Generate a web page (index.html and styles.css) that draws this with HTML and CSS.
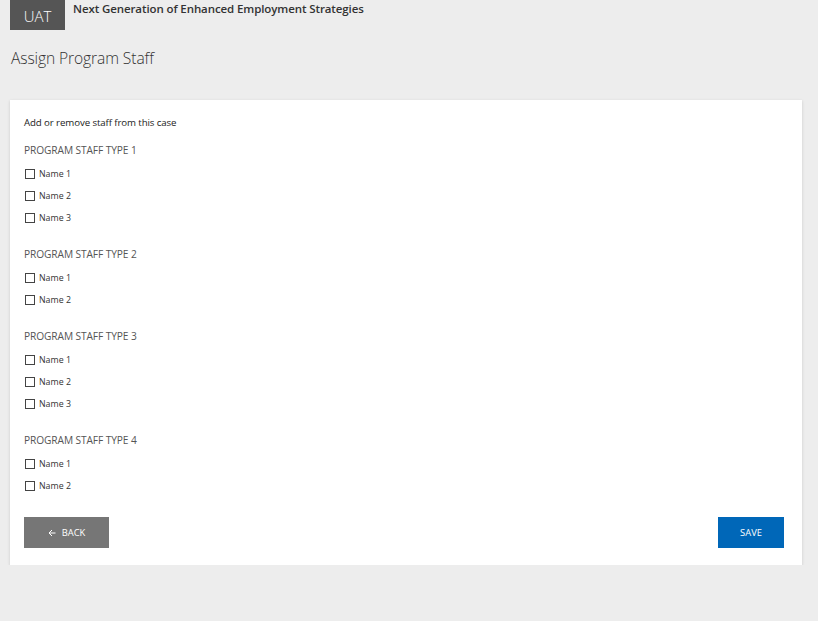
FILE: index.html
```html
<!DOCTYPE html>
<html lang="en">
<head>
    <meta charset="UTF-8">
    <meta name="viewport" content="width=device-width, initial-scale=1.0">
    <title>Assign Program Staff</title>
    <link rel="stylesheet" href="styles.css">
</head>
<body>

<header class="topbar">
    <div class="env-badge">UAT</div>
    <div class="app-name">Next Generation of Enhanced Employment Strategies</div>
</header>

<h1 class="page-title">Assign Program Staff</h1>

<div class="card">
    <p class="intro">Add or remove staff from this case</p>

    <!-- staff groups -->
    <div class="staff-group">
        <h3>PROGRAM STAFF TYPE 1</h3>
        <label class="staff-row"><input type="checkbox"> Name 1</label>
        <label class="staff-row"><input type="checkbox"> Name 2</label>
        <label class="staff-row"><input type="checkbox"> Name 3</label>
    </div>
    <div class="staff-group">
        <h3>PROGRAM STAFF TYPE 2</h3>
        <label class="staff-row"><input type="checkbox"> Name 1</label>
        <label class="staff-row"><input type="checkbox"> Name 2</label>
    </div>
    <div class="staff-group">
        <h3>PROGRAM STAFF TYPE 3</h3>
        <label class="staff-row"><input type="checkbox"> Name 1</label>
        <label class="staff-row"><input type="checkbox"> Name 2</label>
        <label class="staff-row"><input type="checkbox"> Name 3</label>
    </div>
    <div class="staff-group">
        <h3>PROGRAM STAFF TYPE 4</h3>
        <label class="staff-row"><input type="checkbox"> Name 1</label>
        <label class="staff-row"><input type="checkbox"> Name 2</label>
    </div>

    <div class="actions">
        <button type="button" class="btn btn-back">
            <svg width="8" height="8" viewBox="0 0 8 8"><path d="M7.5 4H1M4 1L1 4l3 3" fill="none" stroke="#fff" stroke-width="1"/></svg>
            BACK
        </button>
        <button type="button" class="btn btn-save">SAVE</button>
    </div>
</div>

</body>
</html>
```

FILE: styles.css
```css
* { margin: 0; padding: 0; box-sizing: border-box; }
body {
    background: #ededed; font-family: "Open Sans", "Noto Sans", sans-serif; color: #333;
    padding: 0 16px 0 10px;
}
.topbar { display: flex; align-items: flex-start; height: 30px; }
.env-badge {
    background: #555; color: #fff; width: 55px; height: 30px;
    display: flex; align-items: center; justify-content: center;
    font-size: 15px; font-weight: 300; padding-top: 1px;
}
.app-name {
    margin-left: 8px; font-size: 11.5px; font-weight: 600; color: #333;
    line-height: 18px; letter-spacing: -0.1px;
}
.page-title {
    font-size: 15.6px; font-weight: 300; color: #333; margin: 17px 0 0 1px;
    line-height: 22px; letter-spacing: -0.1px;
}
.card {
    background: #fff; margin-top: 31px; padding: 15px 18px 17px 14px;
    box-shadow: 0 1px 3px rgba(0, 0, 0, 0.15);
}
.intro { font-size: 9.7px; line-height: 16px; color: #222; margin-bottom: 11px; letter-spacing: -0.1px; }
.staff-group + .staff-group { margin-top: 17px; }
.staff-group h3 {
    font-size: 10.2px; font-weight: 400; color: #555; line-height: 16px;
    margin-bottom: 5px; letter-spacing: -0.1px;
}
.staff-row {
    display: flex; align-items: center; height: 22px;
    font-size: 8.8px; color: #333;
}
.staff-row input {
    appearance: none; -webkit-appearance: none; width: 10px; height: 10px;
    border: 1px solid #444; background: #fff; margin: -1px 4px 0 1px;
}
.actions { display: flex; justify-content: space-between; margin-top: 20px; }
.btn {
    border: none; color: #fff; font-family: inherit; font-size: 9.4px;
    height: 31px; display: flex; align-items: center; justify-content: center; gap: 6px;
}
.btn-back { background: #767676; width: 85px; }
.btn-save { background: #0067b8; width: 66px; }
```
